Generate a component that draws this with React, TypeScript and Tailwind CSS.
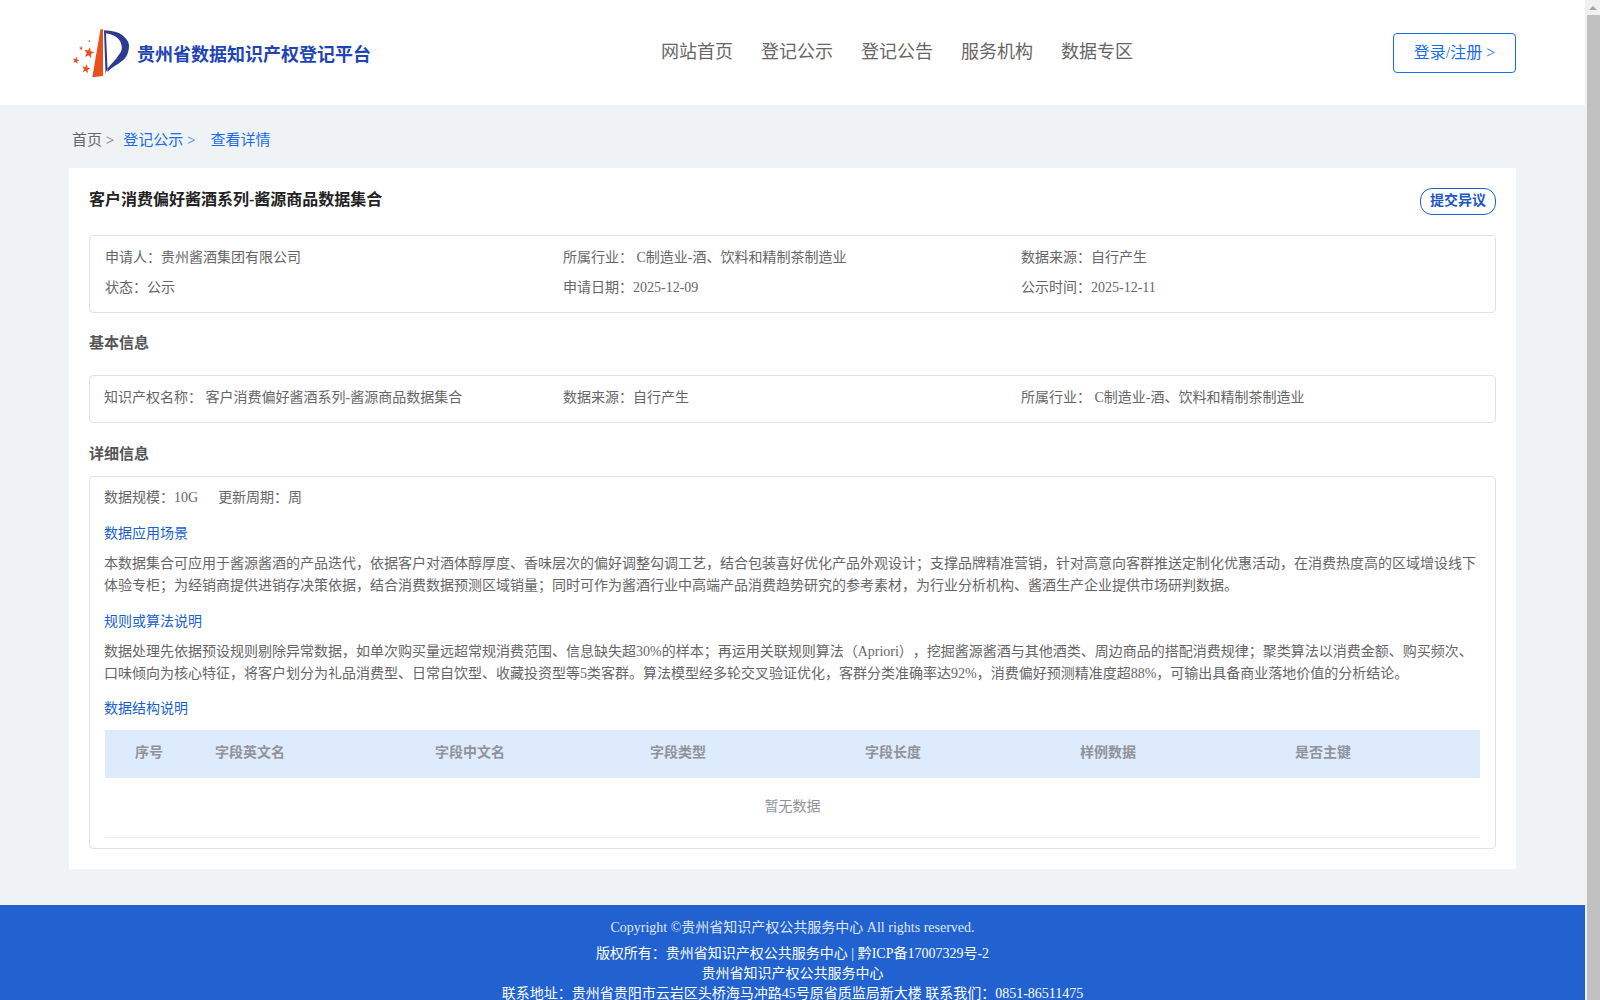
import { Fragment } from 'react';

const fontStack = "font-['Liberation_Serif','Noto_Sans_CJK_SC',serif]";

const navItems = ['网站首页', '登记公示', '登记公告', '服务机构', '数据专区'];

const tableColumns = [
  { label: '序号', width: 'w-[110px] pl-[30px]' },
  { label: '字段英文名', width: 'w-[220px]' },
  { label: '字段中文名', width: 'w-[215px]' },
  { label: '字段类型', width: 'w-[215px]' },
  { label: '字段长度', width: 'w-[215px]' },
  { label: '样例数据', width: 'w-[215px]' },
  { label: '是否主键', width: 'w-[185px]' },
];

const summaryRows = [
  ['申请人：贵州酱酒集团有限公司', '所属行业： C制造业-酒、饮料和精制茶制造业', '数据来源：自行产生'],
  ['状态：公示', '申请日期：2025-12-09', '公示时间：2025-12-11'],
];

function Logo() {
  return (
    <svg width="60" height="52" viewBox="0 0 60 47.500" preserveAspectRatio="none" className="shrink-0">
      <path d="M28.500 2 L20.300 46 L31 44.700 L31 2 Z" fill="#e8501f" />
      <path d="M32 3 C40 3.500 47 4.500 51 8 C55 11 57 14 57 17 C57 21 56 24 54.300 27 C52 30 49 32 46 33.700 C42 36 38 38 35.300 41 L35.500 38 C38 35 41 32 44.300 28.700 C47 25 49.800 23 49.800 19 C49.800 15 48 12.500 46 10.500 C43 8 39 6.500 34 5.800 L35.500 38 L33.500 42.500 Z" fill="#2b3a92" />
      <Star x={17} y={23.600} r={5.500} />
      <Star x={4} y={30.600} r={3.500} />
      <Star x={14} y={38.200} r={4.500} />
      <Star x={9} y={19.400} r={2} />
      <Star x={17.300} y={13} r={1.300} />
    </svg>
  );
}

function Star({ x, y, r }: { x: number; y: number; r: number }) {
  const points = Array.from({ length: 10 }, (_, i) => {
    const radius = i % 2 === 0 ? r : r * 0.42;
    const angle = -Math.PI / 2 + (i * Math.PI) / 5 + 0.2;
    return `${x + radius * Math.cos(angle)},${y + radius * Math.sin(angle)}`;
  }).join(' ');
  return <polygon points={points} fill="#e8501f" />;
}

function Scrollbar() {
  return (
    <div className="flex w-[15px] shrink-0 flex-col bg-[#f1f1f1]">
      <div className="flex h-[15px] items-center justify-center">
        <div className="h-0 w-0 border-x-[4px] border-b-[4px] border-x-transparent border-b-[#a3a3a3]" />
      </div>
      <div className="ml-[2px] flex-1 bg-[#c1c1c1]" />
    </div>
  );
}

export default function App() {
  return (
    <div className={`flex h-screen overflow-hidden bg-[#eff3f6] text-[14px] text-[#666] [text-spacing-trim:space-all] ${fontStack}`}>
      <div className="min-w-0 flex-1">
        {/* Header */}
        <header className="flex h-[105px] items-center bg-white pl-[72px]">
          <div className="flex w-[589px] items-center gap-[5px]">
            <Logo />
            <span className="pt-[6px] text-[18px] font-bold text-[#1f45b5]">贵州省数据知识产权登记平台</span>
          </div>
          <nav className="flex gap-[28px] pb-[1px] text-[18px] text-[#666]">
            {navItems.map((item) => (
              <span key={item}>{item}</span>
            ))}
          </nav>
          <button className="ml-[260px] mt-[1px] h-[40px] w-[123px] rounded-[4px] border border-[#1a6dea] text-[16px] text-[#1a6dea]">
            登录/注册 &gt;
          </button>
        </header>

        {/* Breadcrumb */}
        <div className="flex h-[63px] items-center pt-[8px] pl-[72px] text-[15px]">
          <span>首页 &gt;</span>
          <span className="ml-[9px] text-[#1a6dea]">登记公示 &gt;</span>
          <span className="ml-[15px] text-[#1a6dea]">查看详情</span>
        </div>

        {/* Detail card */}
        <main className="mx-[69px] h-[701px] bg-white px-[20px] pt-[20px]">
          <div className="flex h-[47px] items-start justify-between">
            <h1 className="pt-[1px] text-[16px] font-bold leading-[22px] text-[#222]">客户消费偏好酱酒系列-酱源商品数据集合</h1>
            <button className="h-[27px] w-[76px] rounded-[12px] border border-[#1a5fd0] pb-[2px] text-[14px] font-bold leading-none text-[#1a56c4]">
              提交异议
            </button>
          </div>

          <section className="h-[78px] rounded-[4px] border border-[#e2e2e2] px-[15px] pt-[6px]">
            {summaryRows.map((row, index) => (
              <div key={index} className="grid h-[30px] grid-cols-[458px_458px_1fr] items-center">
                {row.map((cell) => (
                  <span key={cell}>{cell}</span>
                ))}
              </div>
            ))}
          </section>

          <h2 className="flex h-[62px] items-center pb-[2px] text-[15px] font-bold text-[#555]">基本信息</h2>

          <section className="grid h-[48px] grid-cols-[459px_458px_1fr] items-center rounded-[4px] border border-[#e2e2e2] pb-[3px] pl-[14px] pr-[15px]">
            <span>知识产权名称： 客户消费偏好酱酒系列-酱源商品数据集合</span>
            <span>数据来源：自行产生</span>
            <span>所属行业： C制造业-酒、饮料和精制茶制造业</span>
          </section>

          <h2 className="flex h-[53px] items-center pt-[9px] text-[15px] font-bold text-[#555]">详细信息</h2>

          <section className="h-[373px] rounded-[4px] border border-[#e2e2e2] pl-[14px] pr-[15px]">
            <div className="flex h-[40px] items-center gap-[20px]">
              <span>数据规模：10G</span>
              <span>更新周期：周</span>
            </div>
            <h3 className="mt-[6px] text-[14px] leading-[22px] text-[#1a5fd0]">数据应用场景</h3>
            <p className="mt-[8px] text-[14px] leading-[22px]">
              本数据集合可应用于酱源酱酒的产品迭代，依据客户对酒体醇厚度、香味层次的偏好调整勾调工艺，结合包装喜好优化产品外观设计；支撑品牌精准营销，针对高意向客群推送定制化优惠活动，在消费热度高的区域增设线下体验专柜；为经销商提供进销存决策依据，结合消费数据预测区域销量；同时可作为酱酒行业中高端产品消费趋势研究的参考素材，为行业分析机构、酱酒生产企业提供市场研判数据。
            </p>
            <h3 className="mt-[14px] text-[14px] leading-[22px] text-[#1a5fd0]">规则或算法说明</h3>
            <p className="mt-[8px] text-[14px] leading-[22px]">
              数据处理先依据预设规则剔除异常数据，如单次购买量远超常规消费范围、信息缺失超30%的样本；再运用关联规则算法（Apriori），挖掘酱源酱酒与其他酒类、周边商品的搭配消费规律；聚类算法以消费金额、购买频次、口味倾向为核心特征，将客户划分为礼品消费型、日常自饮型、收藏投资型等5类客群。算法模型经多轮交叉验证优化，客群分类准确率达92%，消费偏好预测精准度超88%，可输出具备商业落地价值的分析结论。
            </p>
            <h3 className="mt-[13px] text-[14px] leading-[22px] text-[#1a5fd0]">数据结构说明</h3>

            <div className="ml-[1px] mt-[10px] flex h-[48px] items-center bg-[#deebfc] pb-[3px] font-bold text-[#909399]">
              {tableColumns.map((column) => (
                <Fragment key={column.label}>
                  <span className={column.width}>{column.label}</span>
                </Fragment>
              ))}
            </div>
            <div className="ml-[1px] flex h-[60px] items-center justify-center border-b border-[#ebeef5] pb-[2px] text-[#909399]">暂无数据</div>
          </section>
        </main>

        {/* Footer */}
        <footer className="mt-[36px] h-[130px] bg-[#2162d0] pt-[13px] text-center text-[14px] leading-[20px] text-white">
          <p className="mb-[6px] opacity-85">Copyright ©贵州省知识产权公共服务中心 All rights reserved.</p>
          <p>版权所有：贵州省知识产权公共服务中心 | 黔ICP备17007329号-2</p>
          <p>贵州省知识产权公共服务中心</p>
          <p>联系地址：贵州省贵阳市云岩区头桥海马冲路45号原省质监局新大楼 联系我们：0851-86511475</p>
        </footer>
      </div>
      <Scrollbar />
    </div>
  );
}
